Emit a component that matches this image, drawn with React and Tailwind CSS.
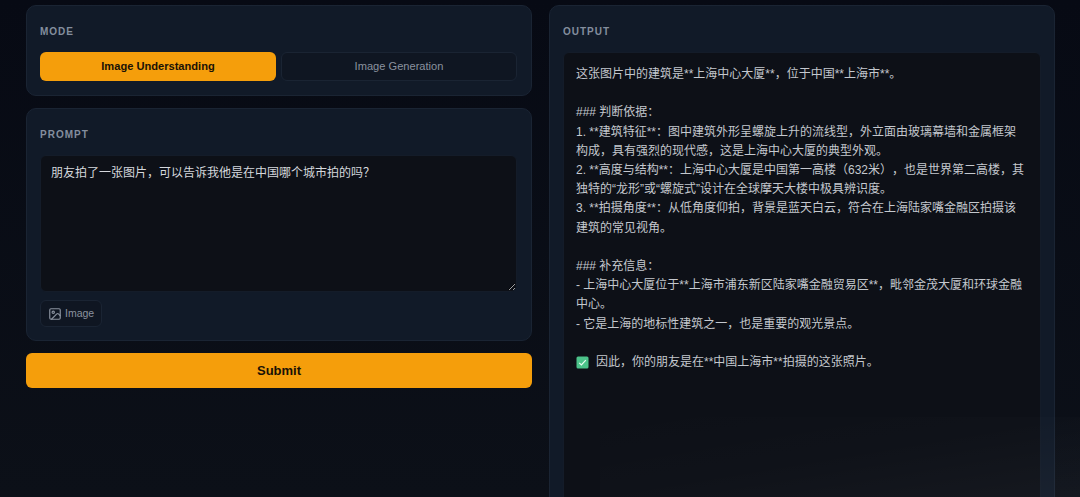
import React from 'react';
import { Image } from 'lucide-react';

const font = { fontFamily: '"Liberation Sans", "Noto Sans CJK SC", sans-serif' };

const output = `这张图片中的建筑是**上海中心大厦**，位于中国**上海市**。

### 判断依据：
1. **建筑特征**：图中建筑外形呈螺旋上升的流线型，外立面由玻璃幕墙和金属框架构成，具有强烈的现代感，这是上海中心大厦的典型外观。
2. **高度与结构**：上海中心大厦是中国第一高楼（632米），也是世界第二高楼，其独特的“龙形”或“螺旋式”设计在全球摩天大楼中极具辨识度。
3. **拍摄角度**：从低角度仰拍，背景是蓝天白云，符合在上海陆家嘴金融区拍摄该建筑的常见视角。

### 补充信息：
- 上海中心大厦位于**上海市浦东新区陆家嘴金融贸易区**，毗邻金茂大厦和环球金融中心。
- 它是上海的地标性建筑之一，也是重要的观光景点。

`;

function Label({ children }) {
  return <div className="text-[10px] leading-[14px] font-bold tracking-[0.1em] text-[#848e9e]">{children}</div>;
}

function Card({ className, children }) {
  return <div className={`rounded-[10px] border border-[#1a2433] bg-[#111a28] ${className}`}>{children}</div>;
}

export default function App() {
  return (
    <div style={font} className="relative h-[497px] overflow-hidden bg-linear-to-b from-[#070a14] to-[#0c1018]">
      <div className="grid grid-cols-[506px_506px] gap-[17px] pl-[26px] pt-[5px]">
        <div className="flex flex-col">
          <Card className="h-[91px] px-[13px] pt-[19px]">
            <Label>MODE</Label>
            <div className="mt-[13px] flex gap-[5px]">
              <button className="h-[29px] w-[236px] rounded-[6px] bg-[#f59e0b] text-[11.1px] font-bold text-[#1a1206]">
                Image Understanding
              </button>
              <button className="h-[29px] w-[236px] rounded-[6px] border border-[#1a2433] bg-[#0f1622] text-[11.1px] text-[#8a929f]">
                Image Generation
              </button>
            </div>
          </Card>
          <Card className="mt-[12px] h-[233px] px-[13px] pt-[19px]">
            <Label>PROMPT</Label>
            <textarea
              style={font}
              defaultValue="朋友拍了一张图片，可以告诉我他是在中国哪个城市拍的吗？"
              className="mt-[13px] block h-[137px] w-[477px] rounded-[6px] border border-[#141c29] bg-[#0d1017] px-[10px] py-[8px] text-[12px] leading-[19px] text-[#d5d8dd] outline-none"
            />
            <button className="mt-[8px] flex h-[27px] w-[62px] items-center gap-[3px] rounded-[6px] border border-[#1a2433] bg-[#0f1622] px-[7px] text-[10.5px] text-[#8a929f]">
              <Image size={14} className="shrink-0" />
              Image
            </button>
          </Card>
          <button className="mt-[12px] h-[35px] rounded-[6px] bg-[#f59e0b] text-[13px] font-bold text-[#1a1206]">
            Submit
          </button>
        </div>
        <Card className="h-[520px] px-[13px] pt-[19px]">
          <Label>OUTPUT</Label>
          <div className="mt-[13px] h-[460px] w-[478px] rounded-[6px] border border-[#141c29] bg-[#0d1017] px-[12px] py-[12px] text-[12px] leading-[19.2px] [text-spacing-trim:space-all] whitespace-pre-wrap text-[#c4c8ce]">
            {output}
            <span className="inline-flex items-center gap-[7px]">
              <svg width="13" height="13" viewBox="0 0 13 13">
                <rect x="0.5" y="0.5" width="12" height="12" rx="1.5" fill="#4cc38a" />
                <path d="M3.2 6.8l2.2 2.2 4.4-4.8" fill="none" stroke="#e8fff2" strokeWidth="1.2" />
              </svg>
              因此，你的朋友是在**中国上海市**拍摄的这张照片。
            </span>
          </div>
        </Card>
      </div>
      {/* faint haze over the bottom right corner */}
      <div className="pointer-events-none absolute right-0 bottom-0 h-[80px] w-[480px] bg-linear-to-tl from-white/[0.035] via-white/[0.01] to-transparent" />
    </div>
  );
}
